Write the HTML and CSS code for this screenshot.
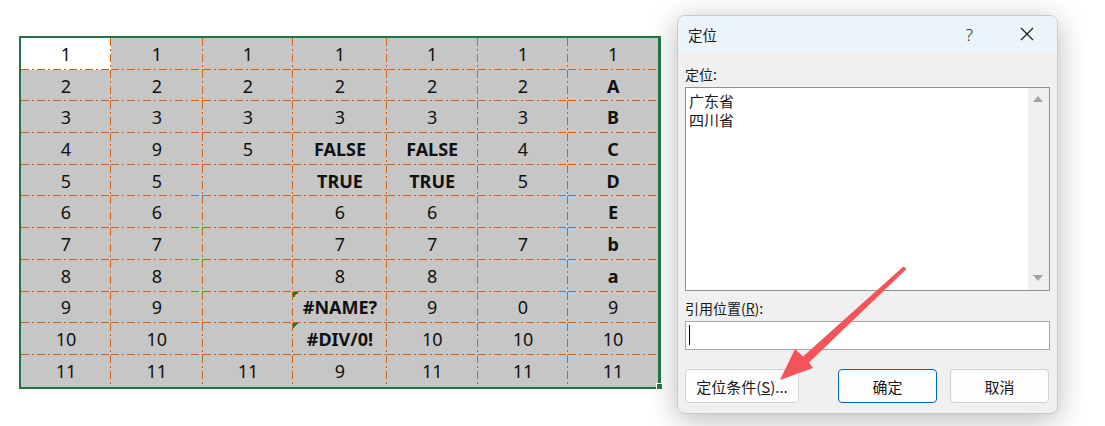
FILE: index.html
```html
<!DOCTYPE html>
<html>
<head>
    <title>定位</title>
    <link rel="stylesheet" href="styles.css">
</head>
<body>
    <div class="sheet">
        <div class="grid">
            <div class="cell active">1</div><div class="cell">1</div><div class="cell">1</div><div class="cell">1</div><div class="cell">1</div><div class="cell">1</div><div class="cell">1</div>
            <div class="cell">2</div><div class="cell">2</div><div class="cell">2</div><div class="cell">2</div><div class="cell">2</div><div class="cell">2</div><div class="cell b">A</div>
            <div class="cell">3</div><div class="cell">3</div><div class="cell">3</div><div class="cell">3</div><div class="cell">3</div><div class="cell">3</div><div class="cell b">B</div>
            <div class="cell">4</div><div class="cell">9</div><div class="cell">5</div><div class="cell b">FALSE</div><div class="cell b">FALSE</div><div class="cell">4</div><div class="cell b">C</div>
            <div class="cell">5</div><div class="cell">5</div><div class="cell"></div><div class="cell b">TRUE</div><div class="cell b">TRUE</div><div class="cell">5</div><div class="cell b">D</div>
            <div class="cell">6</div><div class="cell">6</div><div class="cell"></div><div class="cell">6</div><div class="cell">6</div><div class="cell"></div><div class="cell b">E</div>
            <div class="cell">7</div><div class="cell">7</div><div class="cell"></div><div class="cell">7</div><div class="cell">7</div><div class="cell">7</div><div class="cell b">b</div>
            <div class="cell">8</div><div class="cell">8</div><div class="cell"></div><div class="cell">8</div><div class="cell">8</div><div class="cell"></div><div class="cell b">a</div>
            <div class="cell">9</div><div class="cell">9</div><div class="cell"></div><div class="cell b flag">#NAME?</div><div class="cell">9</div><div class="cell">0</div><div class="cell">9</div>
            <div class="cell">10</div><div class="cell">10</div><div class="cell"></div><div class="cell b flag">#DIV/0!</div><div class="cell">10</div><div class="cell">10</div><div class="cell">10</div>
            <div class="cell">11</div><div class="cell">11</div><div class="cell">11</div><div class="cell">9</div><div class="cell">11</div><div class="cell">11</div><div class="cell">11</div>
        </div>
        <div class="handle"></div>
    </div>

    <div class="dialog">
        <div class="titlebar">
            <span class="title">定位</span>
            <span class="help">?</span>
            <svg class="close" width="14" height="14" viewBox="0 0 14 14">
                <path d="M1 1 L13 13 M13 1 L1 13" stroke="#1a1a1a" stroke-width="1.2" fill="none"/>
            </svg>
        </div>
        <div class="body">
            <div class="label">定位:</div>
            <div class="listbox">
                <div class="items">
                    <div>广东省</div>
                    <div>四川省</div>
                </div>
                <div class="scrollbar">
                    <span class="arrow up"></span>
                    <span class="arrow down"></span>
                </div>
            </div>
            <div class="label second">引用位置(<u>R</u>):</div>
            <div class="input"><span class="caret"></span></div>
            <div class="buttons">
                <div class="btn wide">定位条件(<u>S</u>)...</div>
                <div class="btn primary">确定</div>
                <div class="btn last">取消</div>
            </div>
        </div>
    </div>

    <svg class="pointer" width="1105" height="426" viewBox="0 0 1105 426">
        <polygon points="903.5,266.5 906.5,269 809,362.5 813,368 780,380 795,349 803,356.5" fill="#f5535a"/>
    </svg>
</body>
</html>
```

FILE: styles.css
```css
body {
    margin: 0;
    background: #fff;
    display: flex;
    align-items: flex-start;
    font-family: "Noto Sans", "Noto Sans CJK SC", sans-serif;
    height: 426px;
    overflow: hidden;
}

.sheet {
    position: relative;
    margin: 36px 0 0 19px;
}

.grid {
    display: grid;
    grid-template-columns: 90px 91.7px 90.6px 93.4px 91px 90.6px 89.7px;
    grid-auto-rows: 31.7px;
    border: 2px solid #217346;
    border-right-width: 3px;
}

.cell {
    position: relative;
    display: flex;
    align-items: center;
    justify-content: center;
    font-size: 18px;
    color: #111;
    background-color: #c6c6c6;
    background-image:
        repeating-linear-gradient(to right, #c8641e 0 8px, transparent 8px 11px, #c8641e 11px 13px, transparent 13px 16px),
        repeating-linear-gradient(to bottom, #c8641e 0 8px, transparent 8px 11px, #c8641e 11px 13px, transparent 13px 16px);
    background-size: 100% 1px, 1px 100%;
    background-position: left bottom, right top;
    background-repeat: no-repeat;
}

.cell:nth-child(7n) {
    background-size: 100% 1px, 0 0;
}

.cell:nth-last-child(-n+7) {
    background-size: 0 0, 1px 100%;
}

.cell:last-child {
    background-size: 0 0, 0 0;
}

.cell.active {
    background-color: #fff;
}

.b {
    font-weight: bold;
}

.flag::before {
    content: "";
    position: absolute;
    left: 0;
    top: 0;
    width: 6px;
    height: 6px;
    background: linear-gradient(135deg, #1d7a22 50%, transparent 50%);
}

.handle {
    position: absolute;
    right: -2px;
    bottom: -1px;
    width: 5px;
    height: 5px;
    background: #217346;
    border: 1px solid #fff;
}

.dialog {
    margin: 15px 0 0 16px;
    width: 381px;
    height: 399px;
    box-sizing: border-box;
    border: 1px solid #c9c9c9;
    border-radius: 8px;
    background: #f0f0f0;
    box-shadow: 0 6px 30px rgba(0, 0, 0, 0.28);
    overflow: hidden;
    font-family: "Noto Sans CJK SC", sans-serif;
    font-size: 14px;
    color: #1a1a1a;
}

.titlebar {
    height: 36px;
    background: #eaf4f9;
    display: flex;
    align-items: center;
    padding-left: 10px;
}

.title {
    flex: 1;
    font-size: 14.5px;
}

.help {
    font-family: "Noto Sans", sans-serif;
    font-size: 17px;
    font-weight: 300;
    margin-right: 47px;
}

.close {
    margin-right: 23px;
}

.body {
    padding: 0 7px;
}

.label {
    margin-top: 12px;
    height: 20px;
    line-height: 20px;
}

.label.second {
    margin-top: 7px;
}

.listbox {
    margin-top: 3px;
    height: 204px;
    box-sizing: border-box;
    border: 1px solid #8f9195;
    background: #fff;
    display: flex;
}

.items {
    flex: 1;
    padding: 3px 0 0 3px;
    line-height: 19px;
    font-size: 15px;
}

.scrollbar {
    width: 21px;
    background: #f0f0f0;
    display: flex;
    flex-direction: column;
    justify-content: space-between;
    align-items: center;
    padding: 8px 0 9px;
}

.arrow {
    width: 0;
    height: 0;
    border-left: 5px solid transparent;
    border-right: 5px solid transparent;
}

.arrow.up {
    border-bottom: 6px solid #a3a3a3;
}

.arrow.down {
    border-top: 6px solid #a3a3a3;
}

.input {
    margin-top: 3px;
    height: 29px;
    box-sizing: border-box;
    border: 1px solid #a5a7aa;
    background: #fff;
    padding: 3px 0 0 3px;
}

.caret {
    display: block;
    width: 1px;
    height: 20px;
    background: #000;
}

.buttons {
    margin-top: 19px;
    display: flex;
}

.btn {
    height: 34px;
    width: 99px;
    box-sizing: border-box;
    border: 1px solid #d0d0d0;
    border-radius: 4px;
    background: #fdfdfd;
    display: flex;
    align-items: center;
    justify-content: center;
    font-size: 15px;
}

.btn.wide {
    width: 114px;
}

.btn.primary {
    margin-left: auto;
    border-color: #0067c0;
}

.btn.last {
    margin-left: 13px;
    margin-right: 1px;
}

.pointer {
    position: absolute;
    left: 0;
    top: 0;
}
```
